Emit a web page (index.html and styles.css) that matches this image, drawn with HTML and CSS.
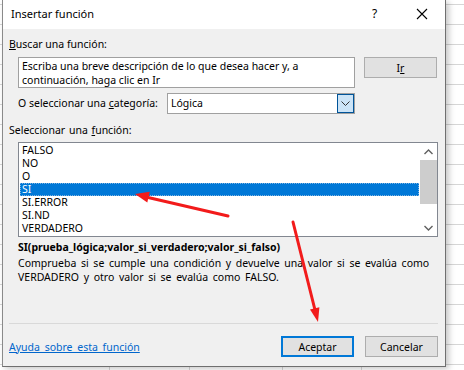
FILE: index.html
```html
<!DOCTYPE html>
<html lang="es">
<head>
<meta charset="utf-8">
<title>Insertar función</title>
<link rel="stylesheet" href="styles.css">
</head>
<body>
<div class="sheet">
  <div class="dialog">
    <div class="titlebar">
      <span class="title">Insertar función</span>
      <span class="help">?</span>
      <span class="close"><svg width="12" height="12" viewBox="0 0 12 12"><path d="M1 1L11 11M11 1L1 11" stroke="#000" stroke-width="1.1" fill="none"/></svg></span>
    </div>
    <div class="content">
      <div class="label lbl-search"><u>B</u>uscar una función:</div>
      <div class="search-row">
        <div class="searchbox">Escriba una breve descripción de lo que desea hacer y, a continuación, haga clic en Ir</div>
        <div class="btn btn-ir">I<u>r</u></div>
      </div>
      <div class="cat-row">
        <span class="cat-label">O seleccionar una <u>c</u>ategoría:</span>
        <div class="select">
          <span class="select-text">Lógica</span>
          <span class="select-btn"><svg width="9" height="5" viewBox="0 0 9 5"><path d="M0.5 0.5L4.5 4.5L8.5 0.5" stroke="#333" stroke-width="1" fill="none"/></svg></span>
        </div>
      </div>
      <div class="label lbl-func">Seleccionar una <u>f</u>unción:</div>
      <div class="listbox">
        <div class="items">
          <div class="item">FALSO</div>
          <div class="item">NO</div>
          <div class="item">O</div>
          <div class="item selected">SI</div>
          <div class="item">SI.ERROR</div>
          <div class="item">SI.ND</div>
          <div class="item">VERDADERO</div>
        </div>
        <div class="scrollbar">
          <span class="sb-arrow"><svg width="9" height="6" viewBox="0 0 9 6"><path d="M0.5 5L4.5 1L8.5 5" stroke="#606060" stroke-width="1.4" fill="none"/></svg></span>
          <span class="sb-thumb"></span>
          <span class="sb-space"></span>
          <span class="sb-arrow"><svg width="9" height="6" viewBox="0 0 9 6"><path d="M0.5 1L4.5 5L8.5 1" stroke="#606060" stroke-width="1.4" fill="none"/></svg></span>
        </div>
      </div>
      <div class="signature">SI(prueba_lógica;valor_si_verdadero;valor_si_falso)</div>
      <div class="desc">Comprueba si se cumple una condición y devuelve una valor si se evalúa como VERDADERO y otro valor si se evalúa como FALSO.</div>
      <div class="spacer"></div>
      <div class="separator"></div>
      <div class="footer">
        <a class="helplink" href="#">Ayuda sobre esta función</a>
        <div class="btn btn-ok">Aceptar</div>
        <div class="btn btn-cancel">Cancelar</div>
      </div>
    </div>
  </div>
</div>
<svg class="annot" width="464" height="370" viewBox="0 0 464 370">
  <line x1="228" y1="216" x2="146" y2="197" stroke="#f21b1b" stroke-width="3" stroke-linecap="round"/>
  <polygon points="135,194 149.8,191.8 147.3,202.4" fill="#f21b1b"/>
  <line x1="293" y1="222" x2="315" y2="310" stroke="#f21b1b" stroke-width="3" stroke-linecap="round"/>
  <polygon points="318,322 319.4,307.2 310,309.6" fill="#f21b1b"/>
</svg>
</body>
</html>
```
FILE: styles.css
```css
html, body {
  margin: 0;
  padding: 0;
}
body {
  width: 464px;
  height: 370px;
  overflow: hidden;
  position: relative;
  font-family: "Noto Sans", Lato, sans-serif;
  font-size: 10.5px;
  color: #000;
  background-color: #fff;
  background-image:
    linear-gradient(to bottom, transparent 4px, #d6d6d6 4px, #d6d6d6 5px, transparent 5px),
    linear-gradient(to right, transparent 109px, #d6d6d6 109px, #d6d6d6 110px, transparent 110px, transparent 189px, #d6d6d6 189px, #d6d6d6 190px, transparent 190px, transparent 282px, #d6d6d6 282px, #d6d6d6 283px, transparent 283px, transparent 361px, #d6d6d6 361px, #d6d6d6 362px, transparent 362px);
  background-size: 464px 20px, 464px 370px;
  background-repeat: repeat-y, no-repeat;
}
.sheet {
  padding-left: 2px;
}
.dialog {
  width: 444px;
  height: 367px;
  border-left: 1px solid #8a8a8a;
  border-right: 1px solid #6f6f6f;
  border-bottom: 1px solid #6f6f6f;
  background: #f0f0f0;
  box-shadow: 3px 2px 6px rgba(0, 0, 0, 0.22);
  display: flex;
  flex-direction: column;
  box-sizing: border-box;
}
.titlebar {
  height: 29px;
  background: #fff;
  display: flex;
  align-items: center;
  padding-left: 8px;
  flex-shrink: 0;
}
.title {
  flex: 1;
  font-size: 11px;
  position: relative;
  top: -1px;
}
.help {
  width: 14px;
  font-size: 12px;
  margin-right: 32px;
  position: relative;
  top: -1px;
  left: 2px;
}
.close {
  width: 12px;
  height: 12px;
  margin-right: 17px;
  display: flex;
  position: relative;
  top: -1px;
}
.content {
  flex: 1;
  display: flex;
  flex-direction: column;
  padding: 0 7px 0 6px;
}
.label {
  height: 14px;
  line-height: 14px;
}
.lbl-search {
  margin-top: 8px;
}
.lbl-func {
  margin-top: 10px;
  word-spacing: 1px;
}
.search-row {
  display: flex;
  margin-top: 6px;
  padding-left: 9px;
}
.searchbox {
  width: 337px;
  height: 31px;
  box-sizing: border-box;
  background: #fff;
  border: 1px solid #a0a0a0;
  padding: 1px 3px 0 3px;
  line-height: 14px;
}
.btn {
  width: 73px;
  height: 21px;
  box-sizing: border-box;
  background: #e1e1e1;
  border: 1px solid #adadad;
  display: flex;
  align-items: center;
  justify-content: center;
}
.btn-ir {
  margin-left: 9px;
}
.cat-row {
  display: flex;
  align-items: center;
  margin-top: 5px;
  padding-left: 9px;
  height: 20px;
}
.cat-label {
  width: 149px;
  white-space: nowrap;
}
.select {
  width: 188px;
  height: 21px;
  box-sizing: border-box;
  background: #fff;
  border: 1px solid #a0a0a0;
  display: flex;
  align-items: center;
}
.select-text {
  flex: 1;
  padding-left: 3px;
}
.select-btn {
  width: 17px;
  height: 19px;
  box-sizing: border-box;
  background: #cce4f7;
  border: 1px solid #005499;
  display: flex;
  align-items: center;
  justify-content: center;
}
.listbox {
  margin: 5px 0 0 9px;
  width: 420px;
  height: 95px;
  box-sizing: border-box;
  border: 1px solid #828790;
  background: #fff;
  display: flex;
}
.items {
  flex: 1;
  padding: 1px 1px 0 1px;
}
.item {
  height: 13px;
  line-height: 13px;
  padding-left: 2px;
}
.item.selected {
  background: #0078d7;
  color: #fff;
  outline: 1px dotted #7fb3e0;
  outline-offset: -1px;
}
.scrollbar {
  width: 17px;
  display: flex;
  flex-direction: column;
  align-items: stretch;
}
.sb-arrow {
  height: 17px;
  display: flex;
  align-items: center;
  justify-content: center;
}
.sb-thumb {
  height: 44px;
  background: #cdcdcd;
}
.sb-space {
  flex: 1;
}
.signature {
  margin-top: 3px;
  padding-left: 9px;
  font-weight: bold;
  height: 14px;
  line-height: 14px;
}
.desc {
  margin-top: 2px;
  padding-left: 9px;
  line-height: 14px;
  width: 425px;
  word-spacing: 1.9px;
}
.spacer {
  flex: 1;
}
.separator {
  height: 1px;
  background: #d9d9d9;
}
.footer {
  display: flex;
  align-items: center;
  margin-top: 12px;
  margin-bottom: 9px;
}
.helplink {
  flex: 1;
  color: #0066cc;
  text-decoration: underline;
  word-spacing: 2px;
}
.btn-ok {
  border: 2px solid #0078d7;
}
.btn-cancel {
  margin-left: 11px;
}
.annot {
  position: absolute;
  left: 0;
  top: 0;
  pointer-events: none;
}
```
